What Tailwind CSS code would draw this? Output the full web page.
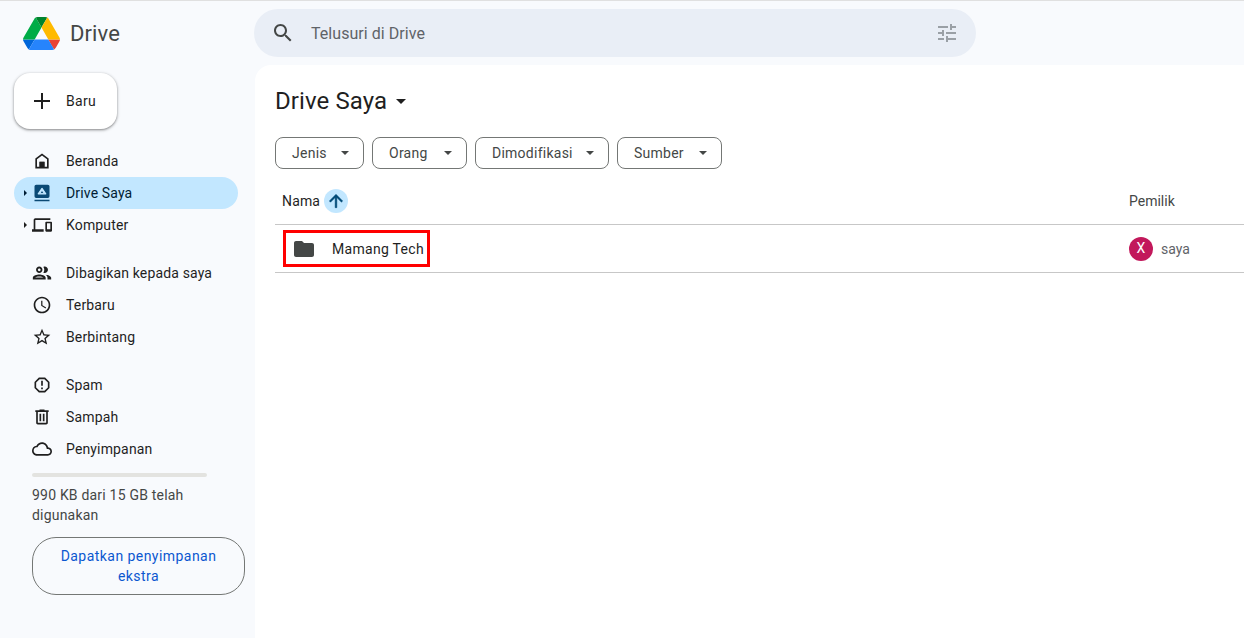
<!DOCTYPE html>
<html lang="id">
<head>
  <meta charset="UTF-8">
  <title>Drive Saya - Google Drive</title>
  <script src="https://cdn.jsdelivr.net/npm/@tailwindcss/browser@4"></script>
</head>
<body class="h-[638px] w-[1244px] overflow-hidden bg-[#f8fafd] font-['Roboto',sans-serif] text-[14px] text-[#1f1f1f]">
  <div class="h-[1px] bg-[#e0e0e0]"></div>

  <!-- top bar -->
  <header class="flex h-[64px] items-center">
    <div class="flex w-[254px] shrink-0 items-center pl-[23px]">
      <svg class="h-[33px] w-[37px]" viewBox="0 0 87.3 78">
        <path d="m6.6 66.85 3.85 6.65c.8 1.4 1.95 2.5 3.3 3.3l13.75-23.8h-27.5c0 1.55.4 3.1 1.2 4.5z" fill="#0066da"/>
        <path d="m43.65 25-13.75-23.8c-1.35.8-2.5 1.9-3.3 3.3l-25.4 44a9.06 9.06 0 0 0 -1.2 4.5h27.5z" fill="#00ac47"/>
        <path d="m73.55 76.8c1.35-.8 2.5-1.9 3.3-3.3l1.6-2.75 7.65-13.25c.8-1.4 1.2-2.95 1.2-4.5h-27.502l5.852 11.5z" fill="#ea4335"/>
        <path d="m43.65 25 13.75-23.8c-1.35-.8-2.9-1.2-4.5-1.2h-18.5c-1.6 0-3.15.45-4.5 1.2z" fill="#00832d"/>
        <path d="m59.8 53h-32.3l-13.75 23.8c1.35.8 2.9 1.2 4.5 1.2h50.8c1.6 0 3.15-.45 4.5-1.2z" fill="#2684fc"/>
        <path d="m73.4 26.5-12.7-22c-.8-1.4-1.95-2.5-3.3-3.3l-13.75 23.8 16.15 28h27.45c0-1.55-.4-3.1-1.2-4.5z" fill="#ffba00"/>
      </svg>
      <span class="ml-[10px] text-[22px] tracking-[.1px] text-[#444746]">Drive</span>
    </div>
    <div class="flex h-[48px] w-[722px] items-center rounded-full bg-[#e9eef6] pl-[17px] pr-[17px]">
      <svg class="h-[24px] w-[24px] fill-[#444746]" viewBox="0 0 24 24"><path d="M15.5 14h-.79l-.28-.27C15.41 12.59 16 11.11 16 9.5 16 5.91 13.09 3 9.5 3S3 5.91 3 9.5 5.91 16 9.5 16c1.61 0 3.09-.59 4.23-1.57l.27.28v.79l5 4.99L20.49 19l-4.99-5zm-6 0C7.01 14 5 11.99 5 9.5S7.01 5 9.5 5 14 7.01 14 9.5 11.99 14 9.5 14z"/></svg>
      <span class="ml-[16px] flex-1 pt-[1px] text-[16px] tracking-[.05px] text-[#5f6368]">Telusuri di Drive</span>
      <svg class="h-[24px] w-[24px] fill-[#9aa0a6]" viewBox="0 0 24 24"><path d="M3 17v2h6v-2H3zM3 5v2h10V5H3zm10 16v-2h8v-2h-8v-2h-2v6h2zM7 9v2H3v2h4v2h2V9H7zm14 4v-2H11v2h10zm-6-4h2V7h4V5h-4V3h-2v6z"/></svg>
    </div>
  </header>

  <div class="flex">
    <!-- sidebar -->
    <aside class="w-[255px] shrink-0 pl-[14px] pt-[8px] tracking-[.15px]">
      <button class="flex h-[56px] w-[103px] items-center rounded-[16px] bg-white pl-[16px] shadow-[0_1px_2px_rgba(0,0,0,.3),0_1px_3px_1px_rgba(0,0,0,.15)]">
        <svg class="h-[24px] w-[24px] fill-[#1f1f1f]" viewBox="0 0 24 24"><path d="M20 13h-7v7h-2v-7H4v-2h7V4h2v7h7v2z"/></svg>
        <span class="ml-[12px] font-[450] tracking-[.3px]">Baru</span>
      </button>

      <nav class="mt-[16px] w-[224px]">
        <a class="flex h-[32px] items-center pl-[18px]">
          <svg class="h-[20px] w-[20px] fill-[#1f1f1f]" viewBox="0 0 24 24"><path d="M12 3 4 9v12h16V9l-8-6zm6 16h-3v-6H9v6H6v-9l6-4.5 6 4.5v9z"/><path d="M9 13h6v6H9z"/></svg>
          <span class="ml-[14px]">Beranda</span>
        </a>
        <a class="relative flex h-[32px] items-center rounded-full bg-[#c2e7ff] pl-[18px] text-[#001d35]">
          <span class="absolute left-[10px] h-0 w-0 border-y-[3px] border-l-[3px] border-y-transparent border-l-[#001d35]"></span>
          <svg class="h-[20px] w-[20px]" viewBox="0 0 24 24"><path fill="#0b4a75" d="M5 2h14a2 2 0 0 1 2 2v12a2 2 0 0 1-2 2H5a2 2 0 0 1-2-2V4a2 2 0 0 1 2-2zm-2 18h18v2H3z"/><path fill="#c2e7ff" stroke="#c2e7ff" stroke-width="1.5" stroke-linejoin="round" d="M12 6.5 7.5 13h9z"/><path fill="#0b4a75" d="M12 9.5 10.5 12h3z"/></svg>
          <span class="ml-[14px]">Drive Saya</span>
        </a>
        <a class="relative flex h-[32px] items-center pl-[18px]">
          <span class="absolute left-[10px] h-0 w-0 border-y-[3px] border-l-[3px] border-y-transparent border-l-[#1f1f1f]"></span>
          <svg class="h-[20px] w-[20px] fill-[#1f1f1f]" viewBox="0 0 24 24"><path d="M4 6h18V4H4c-1.1 0-2 .9-2 2v11H0v3h14v-3H4V6zm19 2h-6c-.55 0-1 .45-1 1v10c0 .55.45 1 1 1h6c.55 0 1-.45 1-1V9c0-.55-.45-1-1-1zm-1 9h-4v-7h4v7z"/></svg>
          <span class="ml-[14px]">Komputer</span>
        </a>
      </nav>

      <nav class="mt-[16px] w-[224px]">
        <a class="flex h-[32px] items-center pl-[17px]">
          <svg class="h-[22px] w-[22px] fill-[#1f1f1f]" viewBox="0 0 24 24"><path d="M9 13.75c-2.34 0-7 1.17-7 3.5V19h14v-1.75c0-2.33-4.66-3.5-7-3.5zM4.34 17c.84-.58 2.87-1.25 4.66-1.25s3.82.67 4.66 1.25H4.34zM9 12c1.93 0 3.5-1.57 3.5-3.5S10.93 5 9 5 5.5 6.57 5.5 8.5 7.07 12 9 12zm0-5c.83 0 1.5.67 1.5 1.5S9.83 10 9 10s-1.5-.67-1.5-1.5S8.17 7 9 7zm7.04 6.81c1.16.84 1.96 1.96 1.96 3.44V19h4v-1.75c0-2.02-3.5-3.17-5.96-3.44zM15 12c1.93 0 3.5-1.57 3.5-3.5S16.93 5 15 5c-.54 0-1.04.13-1.5.35.63.89 1 1.98 1 3.15s-.37 2.26-1 3.15c.46.22.96.35 1.5.35z"/></svg>
          <span class="ml-[13px]">Dibagikan kepada saya</span>
        </a>
        <a class="flex h-[32px] items-center pl-[18px]">
          <svg class="h-[20px] w-[20px] fill-[#1f1f1f]" viewBox="0 0 24 24"><path d="M11.99 2C6.47 2 2 6.48 2 12s4.47 10 9.99 10C17.52 22 22 17.52 22 12S17.52 2 11.99 2zM12 20c-4.42 0-8-3.58-8-8s3.58-8 8-8 8 3.58 8 8-3.58 8-8 8zm.5-13H11v6l5.25 3.15.75-1.23-4.5-2.67z"/></svg>
          <span class="ml-[14px]">Terbaru</span>
        </a>
        <a class="flex h-[32px] items-center pl-[18px]">
          <svg class="h-[20px] w-[20px] fill-[#1f1f1f]" viewBox="0 0 24 24"><path d="M22 9.24l-7.19-.62L12 2 9.19 8.63 2 9.24l5.46 4.73L5.82 21 12 17.27 18.18 21l-1.63-7.03L22 9.24zM12 15.4l-3.76 2.27 1-4.28-3.32-2.88 4.38-.38L12 6.1l1.71 4.04 4.38.38-3.32 2.88 1 4.28L12 15.4z"/></svg>
          <span class="ml-[14px]">Berbintang</span>
        </a>
      </nav>

      <nav class="mt-[16px] w-[224px]">
        <a class="flex h-[32px] items-center pl-[18px]">
          <svg class="h-[20px] w-[20px] fill-[#1f1f1f]" viewBox="0 0 24 24"><path d="M15.73 3H8.27L3 8.27v7.46L8.27 21h7.46L21 15.73V8.27L15.73 3zM19 14.9 14.9 19H9.1L5 14.9V9.1L9.1 5h5.8L19 9.1v5.8z"/><path d="M11 7h2v6h-2zM11 15h2v2h-2z"/></svg>
          <span class="ml-[14px]">Spam</span>
        </a>
        <a class="flex h-[32px] items-center pl-[18px]">
          <svg class="h-[20px] w-[20px] fill-[#1f1f1f]" viewBox="0 0 24 24"><path d="M15 4V3H9v1H4v2h1v13c0 1.1.9 2 2 2h10c1.1 0 2-.9 2-2V6h1V4h-5zm2 15H7V6h10v13z"/><path d="M9 8h2v9H9zm4 0h2v9h-2z"/></svg>
          <span class="ml-[14px]">Sampah</span>
        </a>
        <a class="flex h-[32px] items-center pl-[18px]">
          <svg class="h-[20px] w-[20px] fill-[#1f1f1f]" viewBox="0 0 24 24"><path d="M19.35 10.04C18.67 6.59 15.64 4 12 4 9.11 4 6.6 5.64 5.35 8.04 2.34 8.36 0 10.91 0 14c0 3.31 2.69 6 6 6h13c2.76 0 5-2.24 5-5 0-2.64-2.05-4.78-4.65-4.96zM19 18H6c-2.21 0-4-1.79-4-4 0-2.05 1.53-3.76 3.56-3.97l1.07-.11.5-.95C8.08 7.14 9.94 6 12 6c2.62 0 4.88 1.86 5.39 4.43l.3 1.5 1.53.11c1.56.1 2.78 1.41 2.78 2.96 0 1.65-1.35 3-3 3z"/></svg>
          <span class="ml-[14px]">Penyimpanan</span>
        </a>
      </nav>

      <div class="ml-[18px] mt-[8px]">
        <div class="h-[4px] w-[175px] rounded-full bg-[#e3e3e0]"></div>
        <p class="mt-[8px] w-[200px] text-[14px] leading-[20px] tracking-[.2px] text-[#444746]">990 KB dari 15 GB telah digunakan</p>
        <button class="mt-[12px] h-[58px] w-[213px] rounded-[24px] border border-[#747775] px-[16px] text-center font-[450] leading-[20px] tracking-[.45px] text-[#0b57d0]">Dapatkan penyimpanan ekstra</button>
      </div>
    </aside>

    <!-- main panel -->
    <main class="h-[573px] flex-1 rounded-tl-[16px] bg-white pl-[20px] pt-[20px]">
      <div class="flex h-[32px] items-center">
        <h1 class="text-[24px] font-normal tracking-[.1px]">Drive Saya</h1>
        <span class="ml-[9px] h-0 w-0 border-x-[5px] border-t-[5px] border-x-transparent border-t-[#1f1f1f]"></span>
      </div>

      <div class="mt-[20px] flex gap-[8px] font-[450] tracking-[.25px] text-[#444746]">
        <button class="flex h-[32px] w-[89px] items-center justify-between rounded-[8px] border border-[#747775] pl-[16px] pr-[14px]">Jenis<span class="h-0 w-0 border-x-[4px] border-t-[4px] border-x-transparent border-t-[#444746]"></span></button>
        <button class="flex h-[32px] w-[95px] items-center justify-between rounded-[8px] border border-[#747775] pl-[16px] pr-[14px]">Orang<span class="h-0 w-0 border-x-[4px] border-t-[4px] border-x-transparent border-t-[#444746]"></span></button>
        <button class="flex h-[32px] w-[134px] items-center justify-between rounded-[8px] border border-[#747775] pl-[16px] pr-[14px]">Dimodifikasi<span class="h-0 w-0 border-x-[4px] border-t-[4px] border-x-transparent border-t-[#444746]"></span></button>
        <button class="flex h-[32px] w-[105px] items-center justify-between rounded-[8px] border border-[#747775] pl-[16px] pr-[14px]">Sumber<span class="h-0 w-0 border-x-[4px] border-t-[4px] border-x-transparent border-t-[#444746]"></span></button>
      </div>

      <div class="mt-[8px] flex h-[48px] items-center border-b border-[#c7c7c7]">
        <div class="flex flex-1 items-center pl-[7px]">
          <span class="pt-[1px] font-[450] tracking-[.15px]">Nama</span>
          <span class="ml-[4px] flex h-[24px] w-[24px] items-center justify-center rounded-full bg-[#c2e7ff]">
            <svg class="h-[20px] w-[20px] fill-[#004a77] stroke-[#004a77] stroke-[.6]" viewBox="0 0 24 24"><path d="M4 12l1.41 1.41L11 7.83V20h2V7.83l5.58 5.59L20 12l-8-8-8 8z"/></svg>
          </span>
        </div>
        <div class="w-[115px] shrink-0 pt-[1px] font-[450] text-[#444746]">Pemilik</div>
      </div>

      <div class="flex h-[48px] items-center border-b border-[#c7c7c7]">
        <div class="flex-1 pl-[8px]">
          <div class="flex h-[37px] w-[147px] items-center border-[3px] border-[#ff0000] pl-[6px]">
            <svg class="h-[24px] w-[24px] fill-[#444746]" viewBox="0 0 24 24"><path d="M10 4H4c-1.1 0-1.99.9-1.99 2L2 18c0 1.1.9 2 2 2h16c1.1 0 2-.9 2-2V8c0-1.1-.9-2-2-2h-8l-2-2z"/></svg>
            <span class="ml-[16px] whitespace-nowrap pt-[1px] font-[450] tracking-[.3px]">Mamang Tech</span>
          </div>
        </div>
        <div class="flex w-[115px] shrink-0 items-center">
          <span class="flex h-[24px] w-[24px] items-center justify-center rounded-full bg-[#c2185b] text-[14px] text-white">X</span>
          <span class="ml-[8px] pt-[1px] text-[#5f6368]">saya</span>
        </div>
      </div>
    </main>
  </div>
</body>
</html>
